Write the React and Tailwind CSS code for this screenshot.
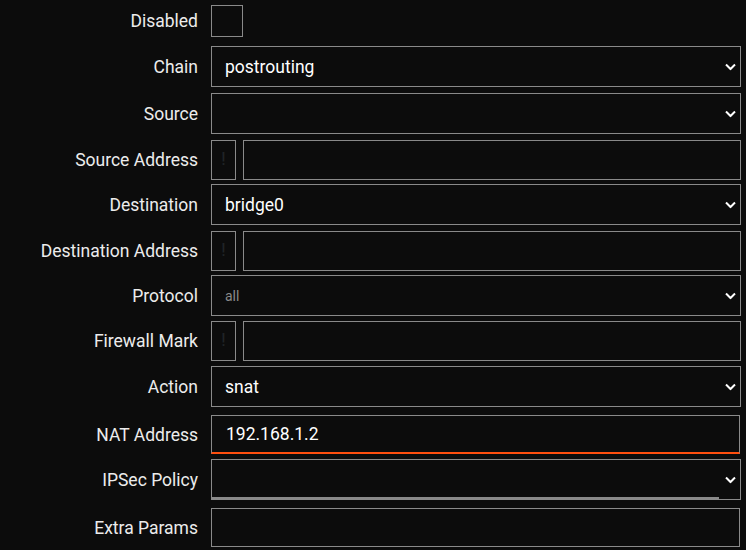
import { useState } from 'react';

// NAT rule editor form

const boxBorder = 'border border-[#8a8a8a]';

function Chevron() {
  return (
    <svg
      className="pointer-events-none absolute right-[5px] top-1/2 -translate-y-1/2"
      width="11"
      height="7"
      viewBox="0 0 11 7"
      fill="none"
    >
      <path d="M1 1l4.5 4.5L10 1" stroke="#ffffff" strokeWidth="2" />
    </svg>
  );
}

function SelectBox({ value, options, muted, underline }) {
  return (
    <div className="relative h-[41px] w-[530px]">
      <select
        value={value}
        onChange={() => {}}
        className={`h-full w-full appearance-none bg-[#0c0c0c] pl-[13px] pt-[1px] outline-none ${boxBorder} ${
          muted ? 'text-[14px] text-[#8a8a8a]' : 'text-[17.5px] text-white'
        }`}
      >
        {options.map((o) => (
          <option key={o} value={o}>
            {o}
          </option>
        ))}
      </select>
      <Chevron />
      {underline && (
        <div className="pointer-events-none absolute bottom-[1px] left-0 h-[2px] w-[508px] bg-[#8a8a8a]" />
      )}
    </div>
  );
}

function TextBox({ value, active }) {
  return (
    <input
      readOnly
      value={value}
      className={`h-[39px] w-[529px] bg-[#0c0c0c] pl-[14px] text-[17.5px] text-white outline-none ${
        active
          ? 'border border-b-2 border-[#8a8a8a] border-b-[#ff4f0f]'
          : boxBorder
      }`}
    />
  );
}

function AddressBox() {
  return (
    <div className="flex h-[40px] items-stretch gap-[7px]">
      <div
        className={`flex w-[25px] items-center justify-center text-[19px] text-[#202427] ${boxBorder}`}
      >
        !
      </div>
      <input readOnly value="" className={`w-[498px] bg-[#0c0c0c] outline-none ${boxBorder}`} />
    </div>
  );
}

export default function App() {
  const [disabled] = useState(false);

  const rows = [
    {
      label: 'Disabled',
      h: 'h-[41px]',
      control: (
        <div className={`h-[32px] w-[32px] ${boxBorder} ${disabled ? 'bg-white' : ''}`} />
      ),
    },
    { label: 'Chain', h: 'h-[42px]', control: <SelectBox value="postrouting" options={['postrouting', 'prerouting']} /> },
    { label: 'Source', h: 'h-[41px]', control: <SelectBox value="" options={['']} /> },
    { label: 'Source Address', h: 'h-[40px]', control: <AddressBox /> },
    { label: 'Destination', h: 'h-[41px]', control: <SelectBox value="bridge0" options={['bridge0']} /> },
    { label: 'Destination Address', h: 'h-[40px]', control: <AddressBox /> },
    { label: 'Protocol', h: 'h-[40px]', control: <SelectBox value="all" options={['all']} muted /> },
    { label: 'Firewall Mark', h: 'h-[41px]', control: <AddressBox /> },
    { label: 'Action', h: 'h-[43px]', control: <SelectBox value="snat" options={['snat', 'masquerade']} /> },
    { label: 'NAT Address', h: 'h-[40px]', control: <TextBox value="192.168.1.2" active /> },
    { label: 'IPSec Policy', h: 'h-[43px]', control: <SelectBox value="" options={['']} underline /> },
    { label: 'Extra Params', h: 'h-[41px]', control: <TextBox value="" /> },
  ];

  return (
    <div
      className="h-[550px] w-[746px] overflow-hidden bg-[#0c0c0c]"
      style={{ fontFamily: 'Roboto, "Liberation Sans", sans-serif' }}
    >
      <div className="flex flex-col gap-[5px]">
        {rows.map((r) => (
          <div key={r.label} className={`flex ${r.h}`}>
            <div className="flex h-[41px] w-[198px] shrink-0 items-center justify-end pt-[2px] text-[17.5px] text-[#ececec]">
              {r.label}
            </div>
            <div className="ml-[13px] flex h-[41px] items-center">{r.control}</div>
          </div>
        ))}
      </div>
    </div>
  );
}
